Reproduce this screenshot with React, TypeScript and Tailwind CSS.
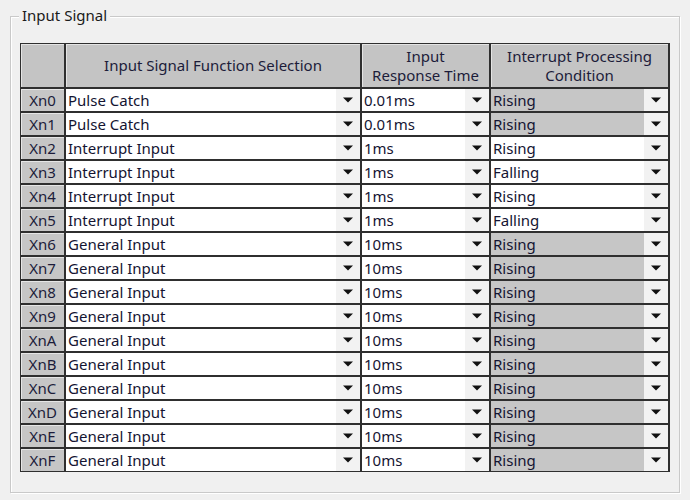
import React from "react";

const rows: [string, string, string, string, boolean][] = [
  ["Xn0", "Pulse Catch", "0.01ms", "Rising", true],
  ["Xn1", "Pulse Catch", "0.01ms", "Rising", true],
  ["Xn2", "Interrupt Input", "1ms", "Rising", false],
  ["Xn3", "Interrupt Input", "1ms", "Falling", false],
  ["Xn4", "Interrupt Input", "1ms", "Rising", false],
  ["Xn5", "Interrupt Input", "1ms", "Falling", false],
  ["Xn6", "General Input", "10ms", "Rising", true],
  ["Xn7", "General Input", "10ms", "Rising", true],
  ["Xn8", "General Input", "10ms", "Rising", true],
  ["Xn9", "General Input", "10ms", "Rising", true],
  ["XnA", "General Input", "10ms", "Rising", true],
  ["XnB", "General Input", "10ms", "Rising", true],
  ["XnC", "General Input", "10ms", "Rising", true],
  ["XnD", "General Input", "10ms", "Rising", true],
  ["XnE", "General Input", "10ms", "Rising", true],
  ["XnF", "General Input", "10ms", "Rising", true],
];

function Arrow() {
  return (
    <div className="w-[24px] h-full bg-[#f2f2f2] flex items-center justify-center shrink-0">
      <svg width="10" height="6" viewBox="0 0 10 6">
        <polygon points="0,0.5 10,0.5 5,5.5" fill="#111" />
      </svg>
    </div>
  );
}

function Drop({ text, gray }: { text: string; gray?: boolean }) {
  return (
    <div className="flex h-[22px] bg-white">
      <div
        className={`flex-1 flex items-center pl-[2px] text-[15px] text-[#141432] ${
          gray ? "bg-[#c6c6c6]" : "bg-white"
        }`}
      >
        {text}
      </div>
      <Arrow />
    </div>
  );
}

export default function App() {
  return (
    <div
      className="w-[690px] h-[500px] bg-[#f0f0f0] relative pt-[8px]"
      style={{ fontFamily: '"Noto Sans", "DejaVu Sans", sans-serif' }}
    >
      <div className="mx-[10px] mt-[8px] h-[477px] border border-[#c9c9c9] shadow-[inset_1px_1px_0_#ffffff,1px_1px_0_#ffffff] relative pt-[26px] pl-[9px]">
        <div className="absolute left-[8px] top-[-13px] px-[3px] bg-[#f0f0f0] text-[15px] text-[#1a1a1a] leading-[22px]">
          Input Signal
        </div>
        <div className="grid grid-cols-[43px_294px_127px_177px] gap-[2px] bg-[#2f2f2f] p-[1px] pr-[2px] pb-[1px] w-[650px]">
          <div className="h-[43px] bg-[#c4c4c4] shadow-[inset_1px_1px_0_#e4e4e4]" />
          <div className="h-[43px] bg-[#c4c4c4] shadow-[inset_1px_1px_0_#e4e4e4] flex items-center justify-center text-[15px] text-[#1c1c3a]">
            Input Signal Function Selection
          </div>
          <div className="h-[43px] bg-[#c4c4c4] shadow-[inset_1px_1px_0_#e4e4e4] flex flex-col items-center justify-center text-[15px] leading-[19px] text-[#1c1c3a]">
            <span>Input</span>
            <span>Response Time</span>
          </div>
          <div className="h-[43px] bg-[#c4c4c4] shadow-[inset_1px_1px_0_#e4e4e4] flex flex-col items-center justify-center text-[15px] leading-[19px] text-[#1c1c3a]">
            <span>Interrupt Processing</span>
            <span>Condition</span>
          </div>
          {rows.map(([id, fn, rt, cond, gray]) => (
            <React.Fragment key={id}>
              <div className="h-[22px] bg-[#c6c6c6] shadow-[inset_1px_1px_0_#e6e6e6] flex items-center justify-center text-[15px] text-[#1c1c3a]">
                {id}
              </div>
              <Drop text={fn} />
              <Drop text={rt} />
              <Drop text={cond} gray={gray} />
            </React.Fragment>
          ))}
        </div>
      </div>
    </div>
  );
}
